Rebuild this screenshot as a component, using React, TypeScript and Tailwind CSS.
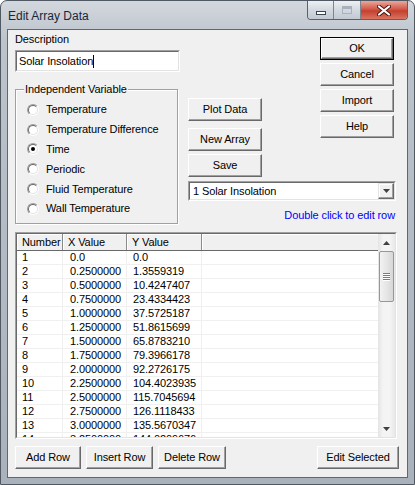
import React from "react";

const rows: [string, string, string][] = [
  ["1", "0.0", "0.0"],
  ["2", "0.2500000", "1.3559319"],
  ["3", "0.5000000", "10.4247407"],
  ["4", "0.7500000", "23.4334423"],
  ["5", "1.0000000", "37.5725187"],
  ["6", "1.2500000", "51.8615699"],
  ["7", "1.5000000", "65.8783210"],
  ["8", "1.7500000", "79.3966178"],
  ["9", "2.0000000", "92.2726175"],
  ["10", "2.2500000", "104.4023935"],
  ["11", "2.5000000", "115.7045694"],
  ["12", "2.7500000", "126.1118433"],
  ["13", "3.0000000", "135.5670347"],
  ["14", "3.2500000", "144.0209676"],
];

const variables = [
  "Temperature",
  "Temperature Difference",
  "Time",
  "Periodic",
  "Fluid Temperature",
  "Wall Temperature",
];

function Button({ label, w, isDefault = false }: { label: string; w: string; isDefault?: boolean }) {
  return (
    <div className={`h-[23px] shrink-0 bg-[#f0f0f0] ${w} ${isDefault ? "border border-black" : ""}`}>
      <div className="flex h-full w-full items-center justify-center border border-t-white border-l-white border-r-[#696969] border-b-[#696969] shadow-[inset_-1px_-1px_0_#a0a0a0] text-black">
        {label}
      </div>
    </div>
  );
}

function Sunken({ className = "", children }: { className?: string; children: React.ReactNode }) {
  return (
    <div className={`border border-t-[#a0a0a0] border-l-[#a0a0a0] border-r-white border-b-white ${className}`}>
      <div className="h-full w-full border border-t-[#696969] border-l-[#696969] border-r-[#e3e3e3] border-b-[#e3e3e3] bg-white">
        {children}
      </div>
    </div>
  );
}

function Radio({ checked }: { checked?: boolean }) {
  return (
    <div className="h-[12px] w-[12px] shrink-0 rounded-full border border-t-[#a0a0a0] border-l-[#a0a0a0] border-r-white border-b-white">
      <div className="flex h-full w-full items-center justify-center rounded-full border border-t-[#696969] border-l-[#696969] border-r-[#e3e3e3] border-b-[#e3e3e3] bg-white">
        {checked && <div className="h-[4px] w-[4px] rounded-full bg-black" />}
      </div>
    </div>
  );
}

function Arrow({ up }: { up?: boolean }) {
  return (
    <svg width="7" height="4" viewBox="0 0 7 4">
      <polygon points={up ? "3.5,0 7,4 0,4" : "0,0 7,0 3.5,4"} fill="#404040" />
    </svg>
  );
}

export default function App() {
  return (
    <div className="flex h-[485px] w-[415px] flex-col overflow-hidden rounded-t-[7px] border border-[#4f5863] bg-[linear-gradient(to_bottom,#d3d8de,#bcc3cb_40px,#a9b1ba)] font-['Liberation_Sans',Arial,sans-serif] text-[11px] tracking-[-0.1px]">
      {/* Title bar */}
      <div className="flex h-[28px] shrink-0 items-start">
        <span className="self-center pl-[7px] pt-[1px] text-[12px] tracking-normal text-[#18273a]">Edit Array Data</span>
        <div className="ml-auto mr-[6px] flex h-[19px] overflow-hidden rounded-b-[4px] border border-t-0 border-[#58616c]">
          <div className="flex w-[26px] items-center justify-center border-r border-[#7b848f] bg-[linear-gradient(to_bottom,#edf0f3,#d3d9e0_50%,#c2c9d2)]">
            <div className="mt-[5px] h-[4px] w-[10px] border border-[#3b4450] bg-white" />
          </div>
          <div className="flex w-[27px] items-center justify-center border-r border-[#7b848f] bg-[linear-gradient(to_bottom,#edf0f3,#d3d9e0_50%,#c2c9d2)]">
            <div className="h-[8px] w-[10px] border border-[#aab1ba] shadow-[inset_0_2px_0_#aab1ba]" />
          </div>
          <div className="flex w-[46px] items-center justify-center bg-[linear-gradient(to_bottom,#eaa79a,#d2594a_45%,#c4402f_55%,#d9745f)]">
            <svg width="14" height="11" viewBox="0 0 14 11">
              <path d="M2 1.5 L12 9.5 M12 1.5 L2 9.5" stroke="#4a1710" strokeWidth="4" strokeLinecap="round" />
              <path d="M2 1.5 L12 9.5 M12 1.5 L2 9.5" stroke="#ffffff" strokeWidth="2.2" strokeLinecap="round" />
            </svg>
          </div>
        </div>
      </div>

      {/* Client area */}
      <div className="mx-[6px] mb-[6px] flex flex-1 flex-col border border-[#5e6874] bg-[#f0f0f0] pl-[7px] text-black">
        <div className="flex h-[202px] shrink-0">
          {/* Left column */}
          <div className="flex w-[165px] flex-col">
            <span className="mt-[3px] leading-[13px]">Description</span>
            <Sunken className="mt-[4px] h-[22px] w-[165px]">
              <div className="flex h-full items-center pl-[2px]">
                <span className="leading-[13px]">Solar Insolation</span>
                <span className="h-[13px] w-[1px] bg-black" />
              </div>
            </Sunken>
            <div className="relative mt-[17px] h-[135px] w-[163px] border border-[#a0a0a0] shadow-[inset_1px_1px_0_#fff,1px_1px_0_#fff]">
              <span className="absolute -top-[8px] left-[8px] bg-[#f0f0f0] px-[1px] leading-[14px]">Independent Variable</span>
              <div className="flex flex-col pl-[11px] pt-[10px]">
                {variables.map((v) => (
                  <div key={v} className="flex h-[19.8px] items-center gap-[7px]">
                    <Radio checked={v === "Time"} />
                    <span className="leading-[13px]">{v}</span>
                  </div>
                ))}
              </div>
            </div>
          </div>

          {/* Right area */}
          <div className="ml-[8px] flex w-[208px] flex-col">
            <div className="flex justify-between pr-[2px]">
              <div className="flex flex-col">
                <div className="mt-[68px]">
                  <Button label="Plot Data" w="w-[74px]" />
                </div>
                <div className="mt-[7px]">
                  <Button label="New Array" w="w-[74px]" />
                </div>
                <div className="mt-[3px]">
                  <Button label="Save" w="w-[74px]" />
                </div>
              </div>
              <div className="flex flex-col gap-[3px] pt-[7px]">
                <Button label="OK" w="w-[74px]" isDefault />
                <Button label="Cancel" w="w-[74px]" />
                <Button label="Import" w="w-[74px]" />
                <Button label="Help" w="w-[74px]" />
              </div>
            </div>
            <Sunken className="mt-[4px] h-[20px] w-[208px]">
              <div className="flex h-full items-center">
                <span className="flex-1 pl-[3px] leading-[13px]">1 Solar Insolation</span>
                <div className="flex h-full w-[16px] items-center justify-center border border-t-[#e3e3e3] border-l-[#e3e3e3] border-r-[#696969] border-b-[#696969] bg-[#f0f0f0] shadow-[inset_-1px_-1px_0_#a0a0a0,inset_1px_1px_0_#fff]">
                  <Arrow />
                </div>
              </div>
            </Sunken>
            <span className="mt-[8px] self-end pr-[1px] leading-[13px] text-[#0000ff]">Double click to edit row</span>
          </div>
        </div>

        {/* List view */}
        <Sunken className="h-[207px] w-[382px] shrink-0">
          <div className="flex h-full">
            <div className="flex flex-1 flex-col overflow-hidden">
              <div className="flex h-[17px] shrink-0 border-b border-[#696969] bg-[#f0f0f0]">
                {[
                  ["Number", "w-[46px]"],
                  ["X Value", "w-[64px]"],
                  ["Y Value", "w-[75px]"],
                ].map(([t, w]) => (
                  <div key={t} className={`flex ${w} shrink-0 items-center border-r border-[#8a8a8a] pl-[5px] shadow-[inset_1px_1px_0_#fff] leading-[13px]`}>
                    {t}
                  </div>
                ))}
                <div className="flex-1 shadow-[inset_1px_1px_0_#fff]" />
              </div>
              {rows.map(([n, x, y]) => (
                <div key={n} className="flex h-[14px] shrink-0 border-b border-[#f0f0f0] leading-[13px]">
                  <div className="w-[46px] shrink-0 border-r border-[#f0f0f0] pl-[5px]">{n}</div>
                  <div className="w-[64px] shrink-0 border-r border-[#f0f0f0] pl-[7px]">{x}</div>
                  <div className="w-[75px] shrink-0 border-r border-[#f0f0f0] pl-[6px]">{y}</div>
                  <div className="flex-1" />
                </div>
              ))}
            </div>
            {/* Scrollbar */}
            <div className="flex w-[17px] shrink-0 flex-col bg-[linear-gradient(to_right,#e4e4e4,#f4f4f4_30%,#f4f4f4_70%,#e8e8e8)]">
              <div className="flex h-[17px] items-center justify-center">
                <Arrow up />
              </div>
              <div className="mx-[1px] flex h-[51px] flex-col items-center justify-center gap-[1px] rounded-[2px] border border-[#979797] bg-[linear-gradient(to_right,#f2f2f2,#e6e6e6_50%,#d7d7d7)]">
                {[0, 1, 2, 3].map((i) => (
                  <div key={i} className="h-[1px] w-[7px] bg-[#7a7a7a] shadow-[0_1px_0_#fff]" />
                ))}
              </div>
              <div className="flex-1" />
              <div className="flex h-[17px] items-center justify-center">
                <Arrow />
              </div>
            </div>
          </div>
        </Sunken>

        {/* Bottom buttons */}
        <div className="mt-[7px] flex w-[384px]">
          <Button label="Add Row" w="w-[66px]" />
          <div className="ml-[5px]">
            <Button label="Insert Row" w="w-[67px]" />
          </div>
          <div className="ml-[5px]">
            <Button label="Delete Row" w="w-[68px]" />
          </div>
          <div className="ml-auto">
            <Button label="Edit Selected" w="w-[82px]" />
          </div>
        </div>
      </div>
    </div>
  );
}
